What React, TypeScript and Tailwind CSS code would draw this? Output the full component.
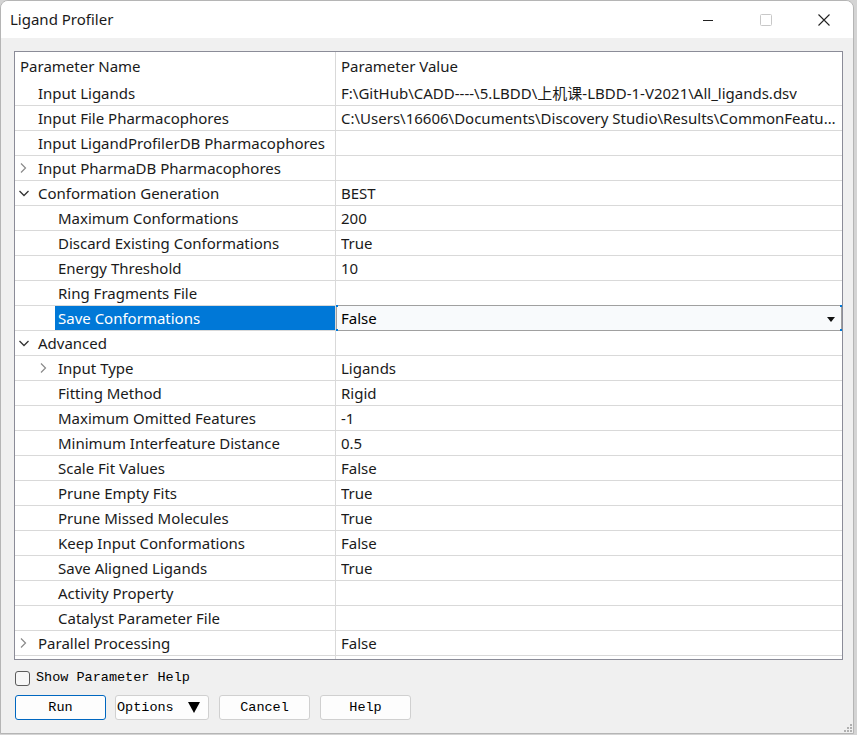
import React from 'react';

type Row = {
  name: string;
  value?: string;
  level: number;
  arrow?: 'right' | 'down';
  selected?: boolean;
};

const rows: Row[] = [
  { name: 'Input Ligands', value: 'F:\\GitHub\\CADD----\\5.LBDD\\上机课-LBDD-1-V2021\\All_ligands.dsv', level: 0 },
  { name: 'Input File Pharmacophores', value: 'C:\\Users\\16606\\Documents\\Discovery Studio\\Results\\CommonFeaturePharmacophores\\Output', level: 0 },
  { name: 'Input LigandProfilerDB Pharmacophores', level: 0 },
  { name: 'Input PharmaDB Pharmacophores', level: 0, arrow: 'right' },
  { name: 'Conformation Generation', value: 'BEST', level: 0, arrow: 'down' },
  { name: 'Maximum Conformations', value: '200', level: 1 },
  { name: 'Discard Existing Conformations', value: 'True', level: 1 },
  { name: 'Energy Threshold', value: '10', level: 1 },
  { name: 'Ring Fragments File', level: 1 },
  { name: 'Save Conformations', value: 'False', level: 1, selected: true },
  { name: 'Advanced', level: 0, arrow: 'down' },
  { name: 'Input Type', value: 'Ligands', level: 1, arrow: 'right' },
  { name: 'Fitting Method', value: 'Rigid', level: 1 },
  { name: 'Maximum Omitted Features', value: '-1', level: 1 },
  { name: 'Minimum Interfeature Distance', value: '0.5', level: 1 },
  { name: 'Scale Fit Values', value: 'False', level: 1 },
  { name: 'Prune Empty Fits', value: 'True', level: 1 },
  { name: 'Prune Missed Molecules', value: 'True', level: 1 },
  { name: 'Keep Input Conformations', value: 'False', level: 1 },
  { name: 'Save Aligned Ligands', value: 'True', level: 1 },
  { name: 'Activity Property', level: 1 },
  { name: 'Catalyst Parameter File', level: 1 },
  { name: 'Parallel Processing', value: 'False', level: 0, arrow: 'right' },
];

const uiFont = { fontFamily: '"Noto Sans", "Noto Sans CJK SC", sans-serif' };
const monoFont = { fontFamily: '"Liberation Mono", "Noto Sans CJK SC", monospace' };

const Chevron = ({ dir }: { dir: 'right' | 'down' }) =>
  dir === 'right' ? (
    <svg width="10" height="12" viewBox="0 0 10 12" className="shrink-0">
      <path d="M3 1.5 L7.5 6 L3 10.5" fill="none" stroke="#8a8a8a" strokeWidth="1.2" />
    </svg>
  ) : (
    <svg width="12" height="10" viewBox="0 0 12 10" className="shrink-0">
      <path d="M1.5 3 L6 7.5 L10.5 3" fill="none" stroke="#333" strokeWidth="1.3" />
    </svg>
  );

const ParamRow = ({ row }: { row: Row }) => {
  const indent = row.level === 0 ? 'pl-[3px]' : 'pl-[23px]';
  return (
    <div className="flex h-[25px] border-b border-[#d9d9d9]">
      <div className={`flex w-[321px] shrink-0 items-center border-r border-[#d9d9d9] ${indent}`}>
        <div className="flex w-[20px] shrink-0 items-center justify-start">
          {row.arrow && <Chevron dir={row.arrow} />}
        </div>
        <div
          className={`flex h-full items-center whitespace-nowrap pr-2 ${
            row.selected ? '-ml-[3px] flex-1 bg-[#0078d7] pl-[3px] text-white' : 'text-[#1a1a1a]'
          }`}
        >
          {row.name}
        </div>
      </div>
      {row.selected ? (
        <div className="relative -my-px flex flex-1 items-center border border-[#a0a0a0] bg-[#f8fafc] pl-[4px]">
          <span className="text-black">{row.value}</span>
          <svg width="8" height="5" viewBox="0 0 8 5" className="absolute right-[6px] top-[11px]">
            <path d="M0 0 H8 L4 5 Z" fill="#111" />
          </svg>
          <span className="absolute -left-px -top-px h-[2px] w-[2px] bg-[#0078d7]" />
          <span className="absolute -right-px -top-px h-[2px] w-[2px] bg-[#0078d7]" />
          <span className="absolute -left-px -bottom-px h-[2px] w-[2px] bg-[#0078d7]" />
          <span className="absolute -right-px -bottom-px h-[2px] w-[2px] bg-[#0078d7]" />
        </div>
      ) : (
        <div className="flex min-w-0 flex-1 items-center pl-[5px] pr-[4px]">
          <span className="truncate text-[#1a1a1a]">{row.value}</span>
        </div>
      )}
    </div>
  );
};

const Button = ({ label, primary, arrow, w }: { label: string; primary?: boolean; arrow?: boolean; w: string }) => (
  <button
    className={`flex h-[25px] items-center rounded-[3px] border bg-[#fdfdfd] text-[13.5px] text-black ${
      primary ? 'border-[#0067c0]' : 'border-[#d0d0d0]'
    } ${arrow ? 'justify-between pl-[1px] pr-[8px]' : 'justify-center'} ${w}`}
    style={monoFont}
  >
    <span>{label}</span>
    {arrow && (
      <svg width="12" height="11" viewBox="0 0 12 11">
        <path d="M0 0 H12 L6 11 Z" fill="#000" />
      </svg>
    )}
  </button>
);

export default function App() {
  return (
    <div className="h-[735px] w-[857px] bg-[#d4d4d4]">
      <div className="flex h-[734px] w-[854px] flex-col overflow-hidden rounded-t-[8px] border border-[#b5b5b5] bg-[#f0f0f0]">
        {/* title bar */}
        <div className="flex h-[37px] shrink-0 items-center bg-white" style={uiFont}>
          <span className="pl-[9px] text-[15px] text-[#1a1a1a]">Ligand Profiler</span>
          <div className="ml-auto flex h-full items-center">
            <div className="flex w-[58px] justify-center">
              <svg width="12" height="12" viewBox="0 0 12 12">
                <path d="M1 6.5 H11" stroke="#222" strokeWidth="1" />
              </svg>
            </div>
            <div className="flex w-[58px] justify-center">
              <svg width="12" height="12" viewBox="0 0 12 12">
                <rect x="0.5" y="0.5" width="11" height="11" rx="1" fill="none" stroke="#c8c8c8" />
              </svg>
            </div>
            <div className="flex w-[58px] justify-center">
              <svg width="12" height="12" viewBox="0 0 12 12">
                <path d="M0.5 0.5 L11.5 11.5 M11.5 0.5 L0.5 11.5" stroke="#222" strokeWidth="1.1" />
              </svg>
            </div>
          </div>
        </div>

        {/* parameter table */}
        <div className="ml-[13px] mt-[13px] flex h-[609px] w-[829px] flex-col border border-[#8b8c98] bg-white text-[15px]" style={uiFont}>
          <div className="flex h-[29px] shrink-0">
            <div className="flex w-[321px] items-center border-r border-[#d9d9d9] pl-[5px] text-[#1a1a1a]">Parameter Name</div>
            <div className="flex flex-1 items-center pl-[5px] text-[#1a1a1a]">Parameter Value</div>
          </div>
          {rows.map((r) => (
            <ParamRow key={r.name} row={r} />
          ))}
          <div className="flex flex-1">
            <div className="w-[321px] border-r border-[#d9d9d9]" />
          </div>
        </div>

        {/* footer */}
        <label className="ml-[14px] mt-[8px] flex items-center gap-[6px] text-[13.5px] text-black" style={monoFont}>
          <span className="h-[15px] w-[15px] rounded-[3px] border border-[#5c5c5c] bg-[#f7f7f7]" />
          <span>Show Parameter Help</span>
        </label>
        <div className="ml-[14px] mt-[7px] flex gap-[10px]">
          <Button label="Run" primary w="w-[91px]" />
          <div className="-ml-px">
            <Button label="Options" arrow w="w-[94px]" />
          </div>
          <Button label="Cancel" w="w-[91px]" />
          <Button label="Help" w="w-[91px]" />
        </div>
        <div className="ml-auto mr-[1px] mt-auto mb-[1px] grid grid-cols-3 gap-[1px]">
          <span />
          <span />
          <span className="h-[2px] w-[2px] bg-[#b0b0b0]" />
          <span />
          <span className="h-[2px] w-[2px] bg-[#b0b0b0]" />
          <span className="h-[2px] w-[2px] bg-[#b0b0b0]" />
          <span className="h-[2px] w-[2px] bg-[#b0b0b0]" />
          <span className="h-[2px] w-[2px] bg-[#b0b0b0]" />
          <span className="h-[2px] w-[2px] bg-[#b0b0b0]" />
        </div>
      </div>
    </div>
  );
}
